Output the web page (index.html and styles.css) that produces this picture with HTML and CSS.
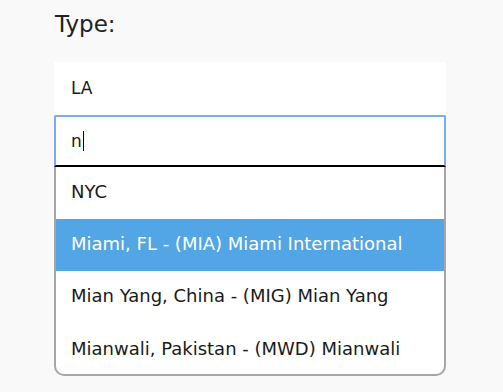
FILE: index.html
```html
<!DOCTYPE html>
<html lang="en">
<head>
    <meta charset="UTF-8">
    <meta name="viewport" content="width=device-width, initial-scale=1.0">
    <title>Type</title>
    <link rel="stylesheet" href="styles.css">
</head>
<body>

<div class="field">
    <label class="field-label">Type:</label>

    <div class="picker">
        <div class="picker-selected">LA</div>
        <div class="picker-search">
            <span class="search-text">n</span><span class="caret"></span>
        </div>
        <ul class="picker-options">
            <li>NYC</li>
            <li class="active">Miami, FL - (MIA) Miami International</li>
            <li>Mian Yang, China - (MIG) Mian Yang</li>
            <li>Mianwali, Pakistan - (MWD) Mianwali</li>
        </ul>
    </div>
</div>

</body>
</html>
```

FILE: styles.css
```css
body {
    margin: 0;
    background-color: #f9f9f9;
    font-family: "DejaVu Sans", "Noto Sans", sans-serif;
    color: #1a1a1a;
}

.field {
    width: 392px;
    margin-left: 54px;
    padding-top: 10px;
}

.field-label {
    display: block;
    font-size: 23px;
    line-height: 28px;
    padding-left: 1px;
    color: #222;
    margin-bottom: 24px;
}

.picker {
    display: flex;
    flex-direction: column;
}

.picker-selected {
    height: 53px;
    display: flex;
    align-items: center;
    padding-left: 17px;
    padding-bottom: 1px;
    background-color: #fff;
    font-size: 17px;
    box-sizing: border-box;
}

.picker-search {
    height: 52px;
    display: flex;
    align-items: center;
    padding-left: 15px;
    background-color: #fff;
    border: 2px solid #7aabf5;
    border-bottom: 2px solid #000;
    border-radius: 2px 2px 0 0;
    box-sizing: border-box;
    font-size: 17px;
}

.caret {
    display: inline-block;
    width: 1px;
    height: 20px;
    margin-left: 1px;
    background-color: #000;
}

.picker-options {
    list-style: none;
    margin: 0;
    padding: 0;
    background-color: #fff;
    border: 2px solid #a6a6a6;
    border-top: none;
    border-radius: 0 0 10px 10px;
}

.picker-options li {
    height: 52px;
    display: flex;
    align-items: center;
    padding-left: 15px;
    padding-bottom: 3px;
    box-sizing: border-box;
    font-size: 18px;
    color: #1a1a1a;
}

.picker-options li:last-child {
    height: 51px;
    padding-bottom: 1px;
}

.picker-options li.active {
    background-color: #53a6e5;
    color: #fff;
}
```
